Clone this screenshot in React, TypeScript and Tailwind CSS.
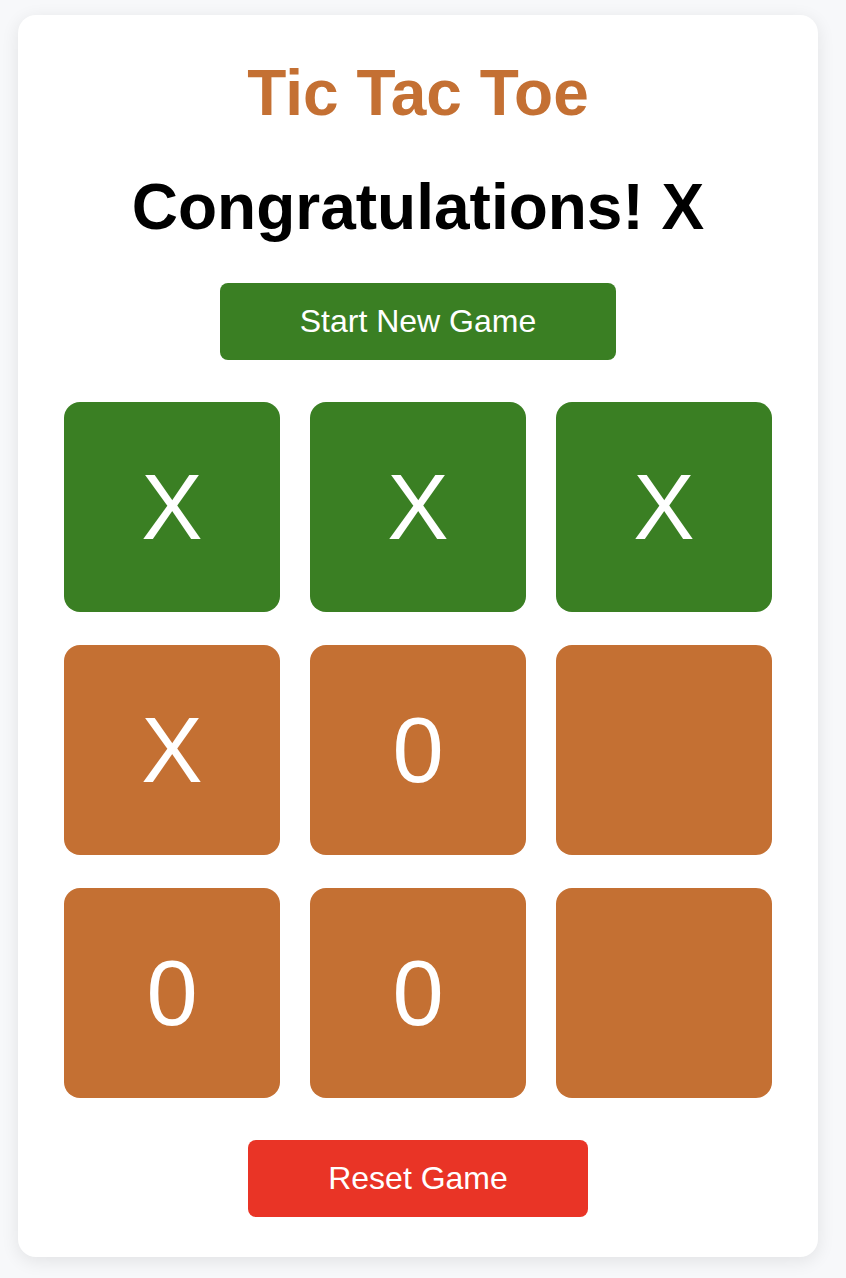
import React from "react";

const cells: { v: string; win: boolean }[] = [
  { v: "X", win: true },
  { v: "X", win: true },
  { v: "X", win: true },
  { v: "X", win: false },
  { v: "0", win: false },
  { v: "", win: false },
  { v: "0", win: false },
  { v: "0", win: false },
  { v: "", win: false },
];

export default function App() {
  return (
    <div
      className="min-h-[1278px] w-full bg-[#f7f8fa] pt-[15px] pb-[21px]"
      style={{ fontFamily: '"Liberation Sans", Arial, Helvetica, sans-serif' }}
    >
      <div className="ml-[18px] flex w-[800px] flex-col items-center rounded-[18px] bg-white pt-[41px] pb-[40px] shadow-[0_4px_18px_rgba(0,0,0,0.09)]">
        <h1 className="text-[64px] font-bold leading-[74px] text-[#c47033]">
          Tic Tac Toe
        </h1>
        <h2 className="mt-[40px] text-[64px] font-bold leading-[74px] text-black">
          Congratulations! X
        </h2>
        <button className="mt-[39px] flex h-[77px] items-center justify-center rounded-lg bg-[#3a7f23] px-20 text-[32px] leading-[37px] text-white">
          Start New Game
        </button>
        <div className="mt-[42px] grid w-[708px] grid-cols-3 gap-x-[30px] gap-y-[33px]">
          {cells.map((c, i) => (
            <div
              key={i}
              className={`flex h-[210px] items-center justify-center rounded-2xl text-[92px] leading-[106px] text-white ${
                c.win ? "bg-[#3a7f23]" : "bg-[#c47033]"
              }`}
            >
              {c.v}
            </div>
          ))}
        </div>
        <button className="mt-[42px] flex h-[77px] items-center justify-center rounded-lg bg-[#e93426] px-20 text-[32px] leading-[37px] text-white">
          Reset Game
        </button>
      </div>
    </div>
  );
}
